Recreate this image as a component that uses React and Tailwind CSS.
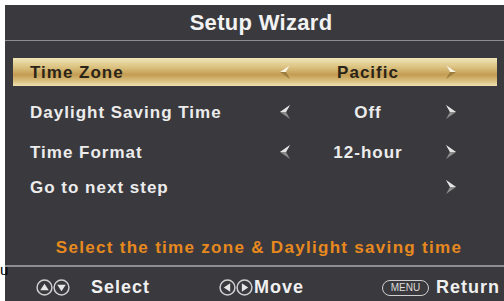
import React from 'react';

const font = { fontFamily: '"Liberation Sans", Arial, sans-serif' };

function Arrow({ dir = 'left', gold = false }) {
  const fill = gold ? '#fbf4df' : '#e4e4e4';
  const shade = gold ? '#9c7d40' : '#8c8c8c';
  const pts = dir === 'left' ? '10,0 0,7 10,14 6,7' : '0,0 10,7 0,14 4,7';
  const half = dir === 'left' ? '10,0 0,7 6,7' : '0,0 10,7 4,7';
  return (
    <svg width="10" height="14" viewBox="0 0 10 14">
      <polygon points={pts} fill={shade} />
      <polygon points={half} fill={fill} />
    </svg>
  );
}

function CircleIcon({ dir }) {
  const tri = {
    up: '8,4.5 12,10.5 4,10.5',
    down: '4,5.5 12,5.5 8,11.5',
    left: '4.5,8 10.5,4 10.5,12',
    right: '11.5,8 5.5,4 5.5,12',
  }[dir];
  return (
    <svg width="17" height="17" viewBox="0 0 16 16">
      <circle cx="8" cy="8" r="7" fill="none" stroke="#d0d0d0" strokeWidth="1.4" />
      <polygon points={tri} fill="#e6e6e6" />
    </svg>
  );
}

function Row({ label, value, active, arrows = true, className = '' }) {
  const txt = active ? 'text-[#2a2418]' : 'text-[#ececec]';
  return (
    <div
      className={`flex items-center h-[28px] ${active ? 'ml-[8px] w-[484px] pl-[17px]' : 'pl-[25px]'} ${className}`}
      style={
        active
          ? { background: 'linear-gradient(to bottom, #f1e6b8 0%, #d9bf7c 35%, #c49c52 60%, #dcc585 85%, #efe2b0 100%)' }
          : undefined
      }
    >
      <div className={`w-[249px] text-[17px] font-bold tracking-[1px] ${txt}`}>{label}</div>
      <div className="w-[12px] flex justify-center">{arrows && <Arrow dir="left" gold={active} />}</div>
      <div className={`w-[154px] text-center text-[17px] font-bold tracking-[1px] ${txt}`}>{value}</div>
      <div className="w-[12px] flex justify-center">
        <Arrow dir="right" gold={active} />
      </div>
    </div>
  );
}

export default function App() {
  return (
    <div className="w-[504px] h-[301px] bg-white overflow-hidden relative" style={font}>
      <div className="absolute left-0 top-[262px] text-[15px] leading-none text-black">u</div>
      <div className="ml-[5px] mt-[5px] w-[499px] h-[296px] bg-[#3a3a3e] flex flex-col">
        <div className="h-[40px] flex items-center justify-center pl-[13px] text-[22px] font-bold tracking-[0.3px] text-[#f2f2f2]">
          Setup Wizard
        </div>
        <div className="h-[2px] bg-[#8e8e92]" />
        <div className="mt-[17px]">
          <Row label="Time Zone" value="Pacific" active />
          <Row label="Daylight Saving Time" value="Off" className="mt-[12px]" />
          <Row label="Time Format" value="12-hour" className="mt-[12px]" />
          <Row label="Go to next step" value="" arrows={false} className="mt-[7px]" />
        </div>
        <div className="mt-[35px] h-[22px] flex items-center justify-center pl-[9px] text-[17px] font-bold tracking-[1.3px] text-[#e8891e]">
          Select the time zone &amp; Daylight saving time
        </div>
        <div className="mt-[7px] h-[2px] bg-[#8e8e92]" />
        <div className="flex-1 flex items-center text-[18px] font-bold tracking-[1px] text-[#f0f0f0] pt-[7px]">
          <div className="ml-[31px] flex">
            <CircleIcon dir="up" />
            <CircleIcon dir="down" />
          </div>
          <span className="ml-[21px] w-[128px]">Select</span>
          <div className="flex">
            <CircleIcon dir="left" />
            <CircleIcon dir="right" />
          </div>
          <span className="ml-[1px] w-[128px]">Move</span>
          <div className="h-[16px] w-[47px] rounded-full border border-[#cfcfcf] flex items-center justify-center text-[10px] font-normal tracking-normal text-[#dcdcdc]">
            MENU
          </div>
          <span className="ml-[7px]">Return</span>
        </div>
      </div>
    </div>
  );
}
